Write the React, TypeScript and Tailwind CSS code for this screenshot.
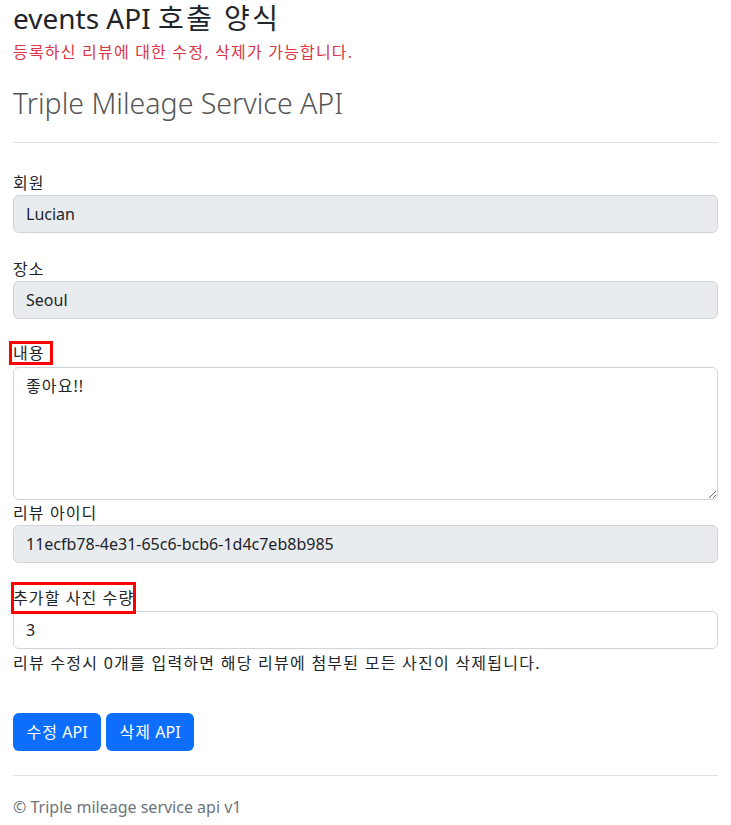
const font = {
  fontFamily: '"Noto Sans", "Noto Sans CJK KR", sans-serif',
};

// 한글 텍스트 폭 보정
function Ko({ children, className = "tracking-[1.1px]" }: { children: React.ReactNode; className?: string }) {
  return <span className={className}>{children}</span>;
}

// 빨간 테두리로 강조된 라벨
function MarkedLabel({ children, box }: { children: React.ReactNode; box: string }) {
  return (
    <label className="relative inline-block h-6 leading-6">
      {children}
      <span className={"pointer-events-none absolute border-[3px] border-[#ff0000] " + box} />
    </label>
  );
}

function Field({ label, value }: { label: React.ReactNode; value: string }) {
  return (
    <div className="flex flex-col">
      <div className="h-6 leading-6">{label}</div>
      <input
        readOnly
        value={value}
        className="h-[38px] w-full rounded-[6px] border border-[#ced4da] bg-[#e9ecef] px-3 text-[#212529] outline-none"
      />
    </div>
  );
}

export default function App() {
  return (
    <div className="min-h-[825px] bg-white px-[13px] text-[16px] text-[#212529]" style={font}>
      <h3 className="pt-[2px] text-[28px] leading-[32px]">
        events API <Ko className="tracking-[2.4px]">호출 양식</Ko>
      </h3>
      <p className="mt-[6px] leading-6 text-[#dc3545]">
        <Ko className="tracking-[1.2px]">등록하신 리뷰에 대한 수정, 삭제가 가능합니다.</Ko>
      </p>

      <h2 className="mt-[19px] text-[28.5px] font-light leading-[40px] text-[#555]">
        Triple Mileage Service API
      </h2>
      <hr className="mt-[19px] border-t border-[#dee2e6]" />

      <div className="mt-[28px] flex flex-col">
        <Field label={<Ko>회원</Ko>} value="Lucian" />
        <div className="mt-[24px]">
          <Field label={<Ko>장소</Ko>} value="Seoul" />
        </div>

        <div className="mt-[22px] flex flex-col">
          <div>
            <MarkedLabel box="-left-[4px] -right-[8px] top-[0px] bottom-[0px]">
              <Ko>내용</Ko>
            </MarkedLabel>
          </div>
          <textarea
            readOnly
            value="좋아요!!"
            className="mt-[2px] h-[133px] w-full rounded-[6px] border border-[#ced4da] bg-white px-3 py-[6px] leading-6 tracking-[1.1px] text-[#212529] outline-none"
          />
        </div>

        <div className="mt-[1px]">
          <Field label={<Ko>리뷰 아이디</Ko>} value="11ecfb78-4e31-65c6-bcb6-1d4c7eb8b985" />
        </div>

        <div className="mt-[23px] flex flex-col">
          <div>
            <MarkedLabel box="-left-[2px] -right-[2px] -top-[4px] -bottom-[4px]">
              <Ko>추가할 사진 수량</Ko>
            </MarkedLabel>
          </div>
          <input
            readOnly
            value="3"
            className="mt-[1px] h-[38px] w-full rounded-[6px] border border-[#ced4da] bg-white px-3 text-[#212529] outline-none"
          />
          <div className="mt-[2px] h-6 leading-6">
            <Ko className="tracking-[1.25px]">리뷰 수정시 0개를 입력하면 해당 리뷰에 첨부된 모든 사진이 삭제됩니다.</Ko>
          </div>
        </div>

        <div className="mt-[38px] flex flex-row gap-[5px]">
          <button className="h-[38px] w-[88px] rounded-[6px] bg-[#0d6efd] text-white">
            <Ko>수정</Ko> API
          </button>
          <button className="h-[38px] w-[88px] rounded-[6px] bg-[#0d6efd] text-white">
            <Ko>삭제</Ko> API
          </button>
        </div>
      </div>

      <hr className="mt-[24px] border-t border-[#dee2e6]" />
      <footer className="mt-[19px] leading-6 text-[#6c757d]">© Triple mileage service api v1</footer>
    </div>
  );
}
